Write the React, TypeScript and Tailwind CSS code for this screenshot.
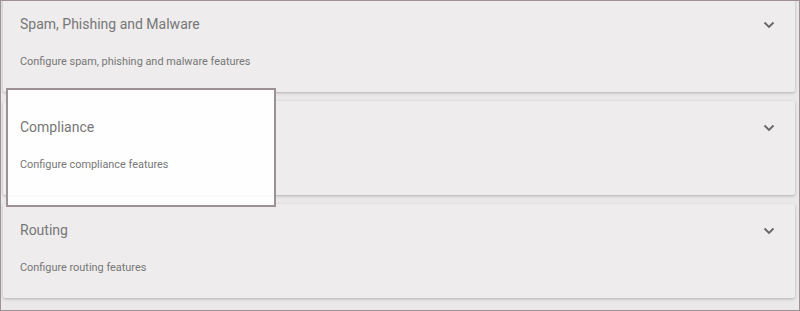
import React from "react";

const sections = [
  { title: "Spam, Phishing and Malware", desc: "Configure spam, phishing and malware features" },
  { title: "Compliance", desc: "Configure compliance features" },
  { title: "Routing", desc: "Configure routing features" },
];

function Chevron() {
  return (
    <svg width="12" height="8" viewBox="0 0 12 8" fill="none" className="text-[#666]">
      <path d="M1.5 1.5 L6 6 L10.5 1.5" stroke="currentColor" strokeWidth="1.8" />
    </svg>
  );
}

export default function App() {
  return (
    <div
      className="relative w-[800px] h-[311px] overflow-hidden border border-[#9d9197] bg-[#ebe8e9] pl-[2px] pr-[4px]"
      style={{ fontFamily: "Roboto, 'Open Sans', sans-serif" }}
    >
      <div className="flex flex-col gap-[9px] -mt-[3px]">
        {sections.map((s) => (
          <div
            key={s.title}
            className="relative h-[94px] rounded-[2px] bg-[#eeecec] shadow-[0_1px_3px_rgba(0,0,0,0.25)]"
          >
            <div className="relative z-10 flex items-start justify-between pl-[17px] pr-[20px] pt-[16px]">
              <div>
                <div className="text-[14px] leading-[20px] text-[#777]">{s.title}</div>
                <div className="mt-[21px] text-[10.9px] leading-[14px] text-[#777]">{s.desc}</div>
              </div>
              <div className="pt-[7px]">
                <Chevron />
              </div>
            </div>
          </div>
        ))}
      </div>
      {/* highlight box */}
      <div className="pointer-events-none absolute left-[5px] top-[87px] z-[5] h-[119px] w-[270px] border-2 border-[#9d9197] bg-white/[0.93]" />
    </div>
  );
}
